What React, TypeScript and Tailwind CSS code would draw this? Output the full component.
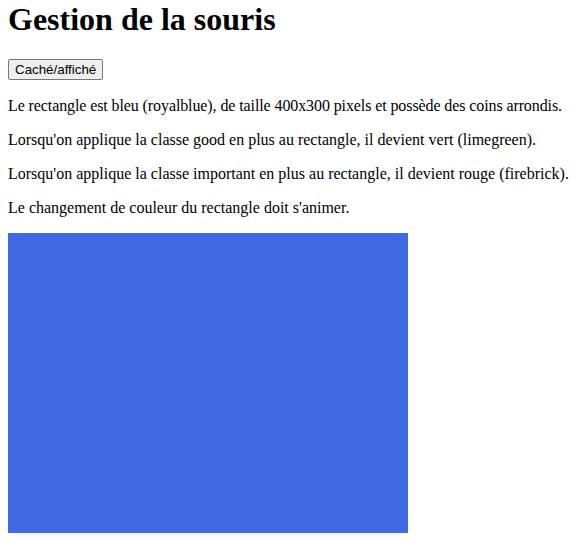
export default function App() {
  return (
    <div className="min-h-[541px] bg-white px-2 pb-2 text-black font-['Liberation_Serif','Times_New_Roman',serif]">
      <h1 className="mt-px text-[32px] leading-[37px] font-bold">Gestion de la souris</h1>

      <button className="mt-[21px] h-[21px] rounded-[2px] border border-[#767676] bg-[#efefef] px-[6px] text-[13.33px] leading-[17px] font-['Liberation_Sans',Arial,sans-serif] text-black">
        Caché/affiché
      </button>

      <p className="mt-4 whitespace-nowrap text-base leading-[18px] tracking-[-0.1px]">
        Le rectangle est bleu (royalblue), de taille 400x300 pixels et possède des coins arrondis.
      </p>
      <p className="mt-4 text-base leading-[18px]">
        Lorsqu'on applique la classe good en plus au rectangle, il devient vert (limegreen).
      </p>
      <p className="mt-4 text-base leading-[18px]">
        Lorsqu'on applique la classe important en plus au rectangle, il devient rouge (firebrick).
      </p>
      <p className="mt-4 text-base leading-[18px]">Le changement de couleur du rectangle doit s'animer.</p>

      <div className="mt-4 h-[300px] w-[400px] bg-[#4169e1] transition-colors duration-500"></div>
    </div>
  );
}
